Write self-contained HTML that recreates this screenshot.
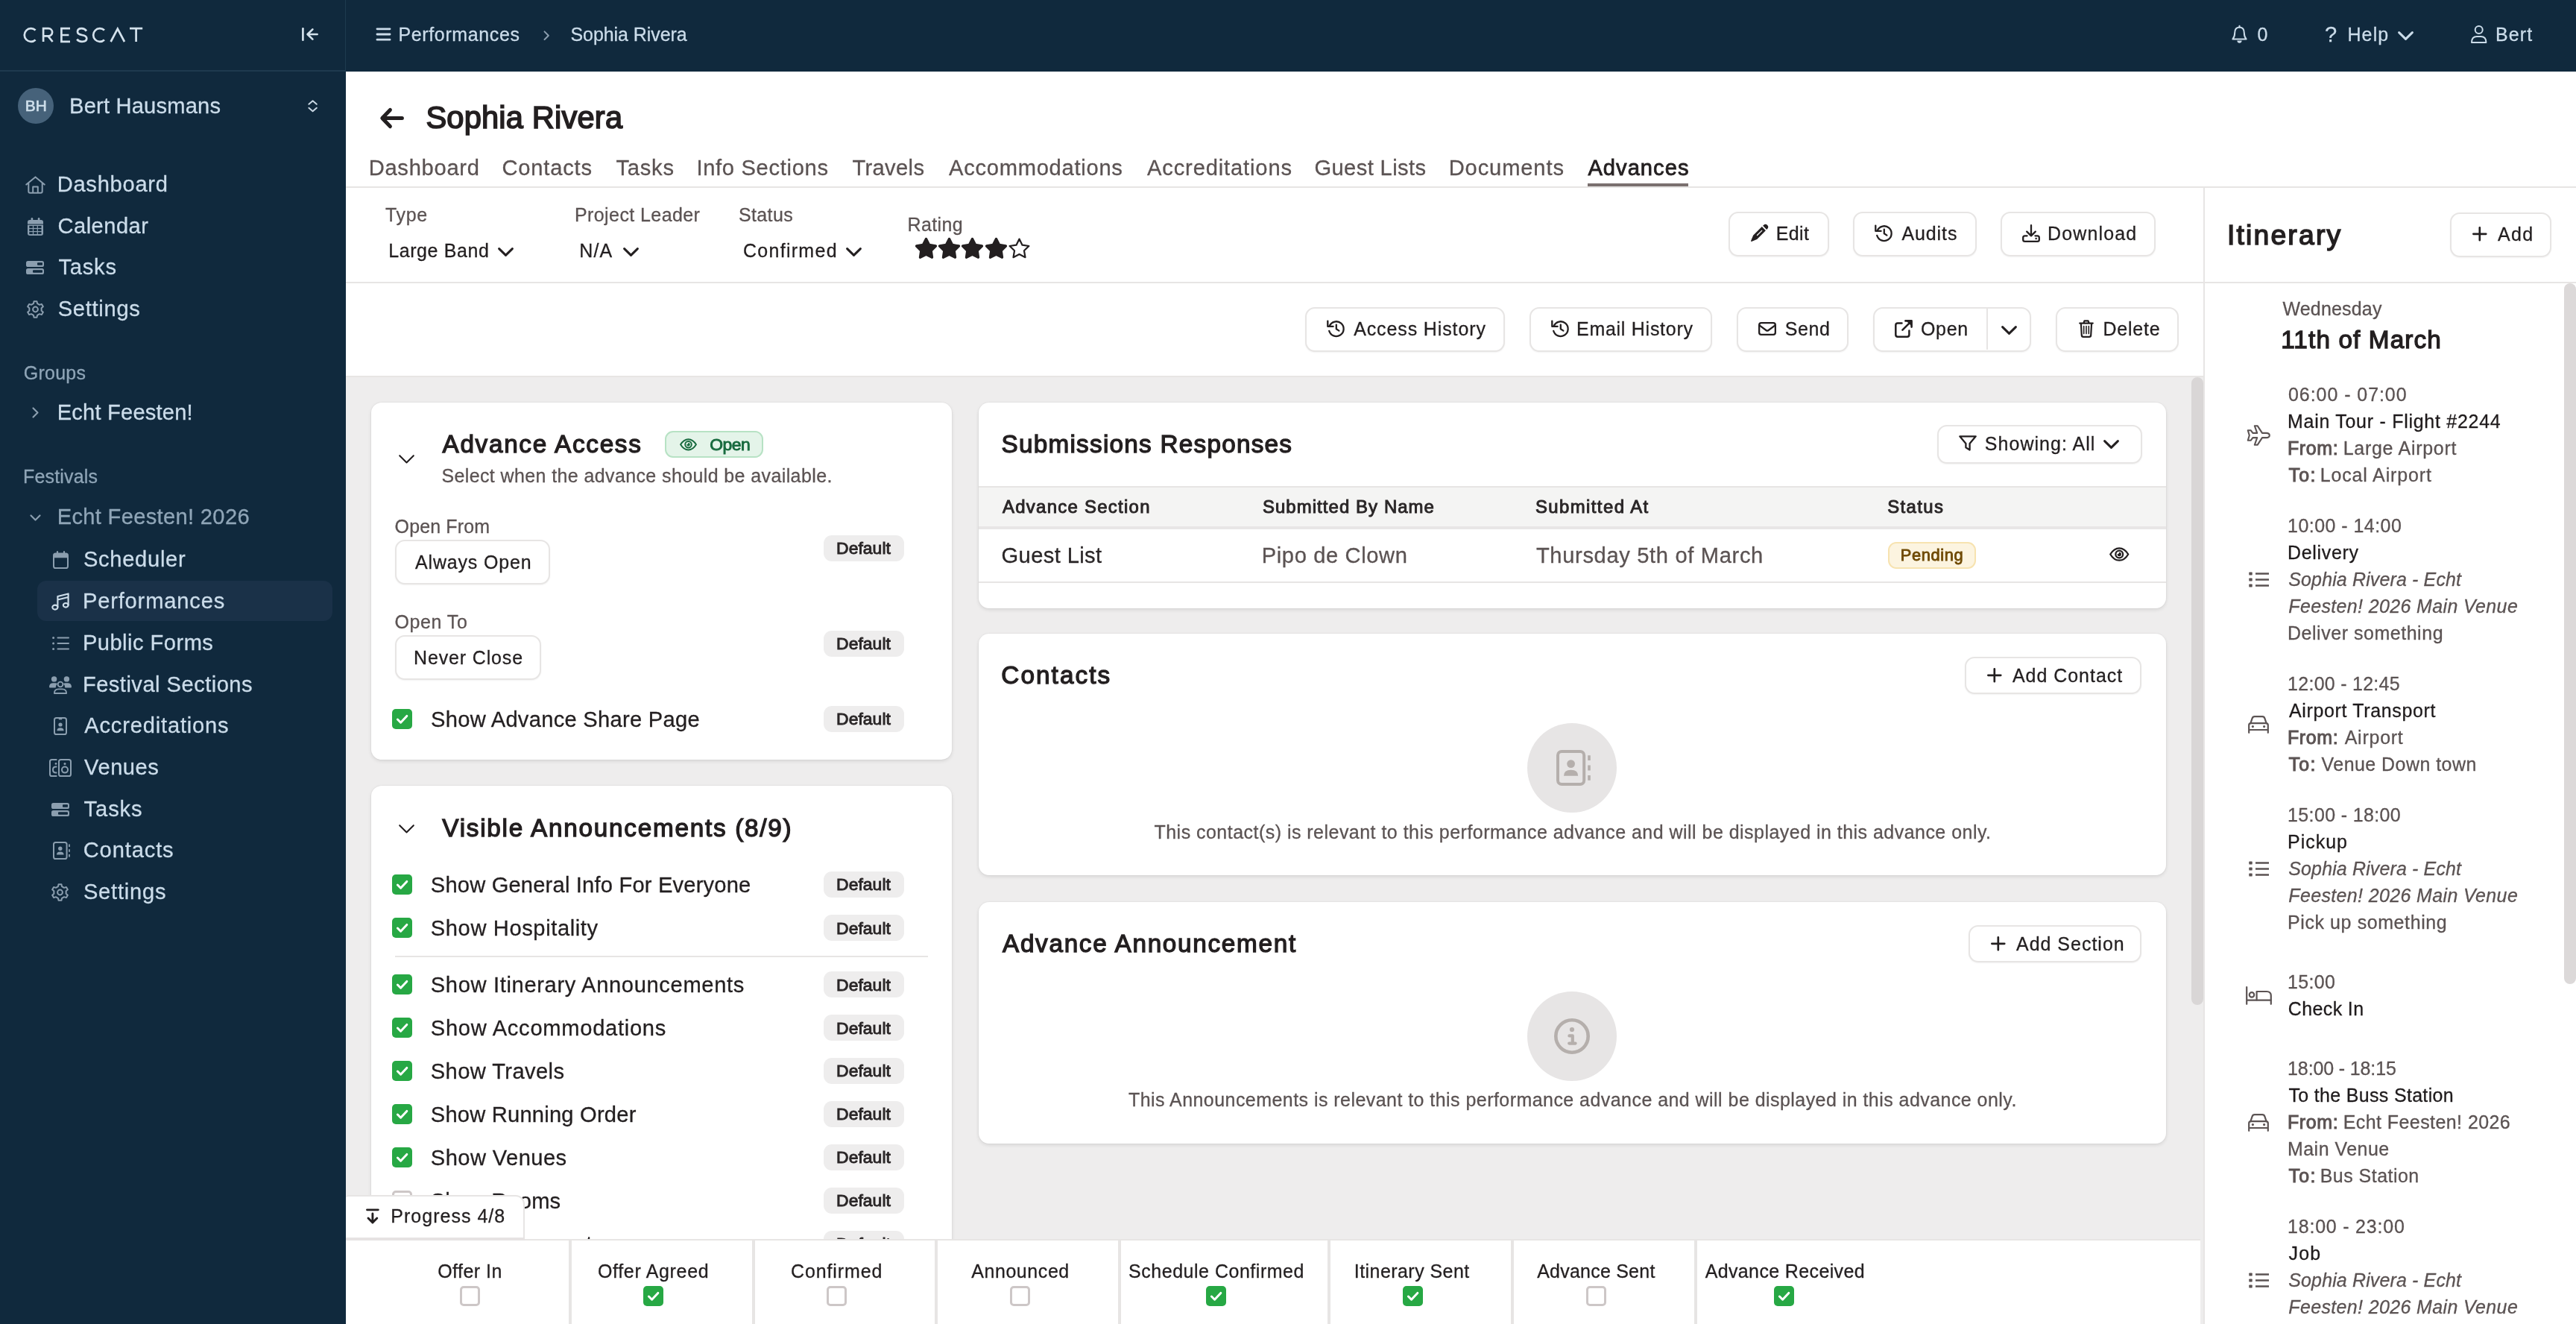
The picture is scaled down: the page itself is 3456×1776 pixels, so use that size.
<!DOCTYPE html>
<html><head><meta charset="utf-8"><title>Sophia Rivera - Advances</title>
<style>
html,body{margin:0;padding:0;}
body{width:3456px;height:1776px;overflow:hidden;position:relative;background:#fff;font-family:"Liberation Sans",sans-serif;}
.t{position:absolute;white-space:nowrap;-webkit-text-stroke:0.3px;}
.b{position:absolute;box-sizing:border-box;}
.i{position:absolute;overflow:visible;}
.card{background:#fff;border-radius:14px;box-shadow:0 2px 4px rgba(0,0,0,.10),0 0 0 1px rgba(0,0,0,.03);}
.btn{background:#fff;border:2px solid #e7e5e4;border-radius:12px;box-shadow:0 1px 2px rgba(0,0,0,.04);}
.pill{background:#eeeded;border-radius:12px;}
#root{position:absolute;left:0;top:0;width:3456px;height:1776px;overflow:hidden;will-change:transform;transform:translateZ(0);}
</style></head><body><div id="root">
<div class="b" style="left:464px;top:506px;width:2492px;height:1270px;background:#eeeded;"></div>
<div class="b" style="left:498px;top:540px;width:779px;height:479px;background:#fff;border-radius:14px;box-shadow:0 2px 5px rgba(0,0,0,.10),0 0 0 1px rgba(0,0,0,.025);"></div>
<svg class="i" style="left:534.7px;top:609.6px" width="21" height="12" viewBox="0 0 21 12"><path d="M1.2 1.2 L10.5 10.5 L19.8 1.2" fill="none" stroke="#231f20" stroke-width="2.1" stroke-linecap="round" stroke-linejoin="round"/></svg>
<div class="t" style="left:593.5px;top:575.0px;height:41px;line-height:41px;font-size:33.28px;color:#231f20;-webkit-text-stroke:1.33px;letter-spacing:1.71px;">Advance Access</div>
<div class="b" style="left:892px;top:578px;width:132px;height:36px;background:#e4f4e9;border:2px solid #b7e2c4;border-radius:11px;"></div>
<svg class="i" style="left:911.7px;top:587.0px" width="23.0" height="18.6" viewBox="0 0 28 20"><path d="M1.3 10 Q6.5 1.3 14 1.3 Q21.5 1.3 26.7 10 Q21.5 18.7 14 18.7 Q6.5 18.7 1.3 10 Z" fill="none" stroke="#176a3e" stroke-width="2.4" stroke-linecap="round" stroke-linejoin="round"/><circle cx="14" cy="10" r="5.2" fill="none" stroke="#176a3e" stroke-width="2.4"/><path d="M14 7.2 A2.8 2.8 0 1 1 11.2 10 Q13.6 10 14 7.2 Z" fill="#176a3e"/></svg>
<div class="t" style="left:952.3px;top:581.0px;height:30px;line-height:30px;font-size:22.88px;color:#176a3e;-webkit-text-stroke:0.92px;letter-spacing:-0.47px;">Open</div>
<div class="t" style="left:592.4px;top:622.0px;height:32px;line-height:32px;font-size:24.96px;color:#5b5353;letter-spacing:0.41px;">Select when the advance should be available.</div>
<div class="t" style="left:529.6px;top:690.0px;height:32px;line-height:32px;font-size:24.96px;color:#5b5353;letter-spacing:0.16px;">Open From</div>
<div class="b" style="left:530px;top:724px;width:208px;height:60px;background:#fff;border:2px solid #e7e5e4;border-radius:13px;box-shadow:0 1px 2px rgba(0,0,0,.05);"></div>
<div class="t" style="left:557.0px;top:738.0px;height:32px;line-height:32px;font-size:24.96px;color:#231f20;letter-spacing:0.86px;">Always Open</div>
<div class="b" style="left:1105px;top:718px;width:108px;height:35px;background:#eeeded;border-radius:11px;"></div>
<div class="t" style="left:1122.1px;top:720.0px;height:30px;line-height:30px;font-size:22.88px;color:#2a2627;-webkit-text-stroke:0.92px;letter-spacing:0.05px;">Default</div>
<div class="t" style="left:529.6px;top:818.0px;height:32px;line-height:32px;font-size:24.96px;color:#5b5353;letter-spacing:0.55px;">Open To</div>
<div class="b" style="left:530px;top:852px;width:196px;height:60px;background:#fff;border:2px solid #e7e5e4;border-radius:13px;box-shadow:0 1px 2px rgba(0,0,0,.05);"></div>
<div class="t" style="left:555.0px;top:866.0px;height:32px;line-height:32px;font-size:24.96px;color:#231f20;letter-spacing:0.88px;">Never Close</div>
<div class="b" style="left:1105px;top:846px;width:108px;height:35px;background:#eeeded;border-radius:11px;"></div>
<div class="t" style="left:1122.1px;top:848.0px;height:30px;line-height:30px;font-size:22.88px;color:#2a2627;-webkit-text-stroke:0.92px;letter-spacing:0.05px;">Default</div>
<div class="b" style="left:526.0px;top:951.0px;width:27px;height:27px;background:#27a844;border-radius:5px;"></div>
<svg class="i" style="left:526.0px;top:951.0px" width="27.0" height="27.0" viewBox="0 0 27 27"><path d="M7.4 14 L11.6 18.2 L19.8 9.4" fill="none" stroke="#fff" stroke-width="3" stroke-linecap="round" stroke-linejoin="round"/></svg>
<div class="t" style="left:578.0px;top:947.0px;height:36px;line-height:36px;font-size:29.12px;color:#231f20;letter-spacing:0.28px;">Show Advance Share Page</div>
<div class="b" style="left:1105px;top:947px;width:108px;height:35px;background:#eeeded;border-radius:11px;"></div>
<div class="t" style="left:1122.1px;top:949.0px;height:30px;line-height:30px;font-size:22.88px;color:#2a2627;-webkit-text-stroke:0.92px;letter-spacing:0.05px;">Default</div>
<div class="b" style="left:498px;top:1054px;width:779px;height:760px;background:#fff;border-radius:14px;box-shadow:0 2px 5px rgba(0,0,0,.10),0 0 0 1px rgba(0,0,0,.025);"></div>
<svg class="i" style="left:534.7px;top:1106.2px" width="21" height="12" viewBox="0 0 21 12"><path d="M1.2 1.2 L10.5 10.5 L19.8 1.2" fill="none" stroke="#231f20" stroke-width="2.1" stroke-linecap="round" stroke-linejoin="round"/></svg>
<div class="t" style="left:593.3px;top:1090.0px;height:41px;line-height:41px;font-size:33.28px;color:#231f20;-webkit-text-stroke:1.33px;letter-spacing:1.75px;">Visible Announcements (8/9)</div>
<div class="b" style="left:525.9px;top:1172.8px;width:27px;height:27px;background:#27a844;border-radius:5px;"></div>
<svg class="i" style="left:525.9px;top:1172.8px" width="27.0" height="27.0" viewBox="0 0 27 27"><path d="M7.4 14 L11.6 18.2 L19.8 9.4" fill="none" stroke="#fff" stroke-width="3" stroke-linecap="round" stroke-linejoin="round"/></svg>
<div class="t" style="left:577.8px;top:1169.0px;height:36px;line-height:36px;font-size:29.12px;color:#231f20;letter-spacing:0.19px;">Show General Info For Everyone</div>
<div class="b" style="left:1105px;top:1169.1px;width:108px;height:35px;background:#eeeded;border-radius:11px;"></div>
<div class="t" style="left:1122.1px;top:1171.0px;height:30px;line-height:30px;font-size:22.88px;color:#2a2627;-webkit-text-stroke:0.92px;letter-spacing:0.05px;">Default</div>
<div class="b" style="left:525.9px;top:1231.0px;width:27px;height:27px;background:#27a844;border-radius:5px;"></div>
<svg class="i" style="left:525.9px;top:1231.0px" width="27.0" height="27.0" viewBox="0 0 27 27"><path d="M7.4 14 L11.6 18.2 L19.8 9.4" fill="none" stroke="#fff" stroke-width="3" stroke-linecap="round" stroke-linejoin="round"/></svg>
<div class="t" style="left:577.8px;top:1227.0px;height:36px;line-height:36px;font-size:29.12px;color:#231f20;letter-spacing:0.61px;">Show Hospitality</div>
<div class="b" style="left:1105px;top:1227.3px;width:108px;height:35px;background:#eeeded;border-radius:11px;"></div>
<div class="t" style="left:1122.1px;top:1230.0px;height:30px;line-height:30px;font-size:22.88px;color:#2a2627;-webkit-text-stroke:0.92px;letter-spacing:0.05px;">Default</div>
<div class="b" style="left:525.9px;top:1307.1px;width:27px;height:27px;background:#27a844;border-radius:5px;"></div>
<svg class="i" style="left:525.9px;top:1307.1px" width="27.0" height="27.0" viewBox="0 0 27 27"><path d="M7.4 14 L11.6 18.2 L19.8 9.4" fill="none" stroke="#fff" stroke-width="3" stroke-linecap="round" stroke-linejoin="round"/></svg>
<div class="t" style="left:577.8px;top:1303.0px;height:36px;line-height:36px;font-size:29.12px;color:#231f20;letter-spacing:0.65px;">Show Itinerary Announcements</div>
<div class="b" style="left:1105px;top:1303.3999999999999px;width:108px;height:35px;background:#eeeded;border-radius:11px;"></div>
<div class="t" style="left:1122.1px;top:1306.0px;height:30px;line-height:30px;font-size:22.88px;color:#2a2627;-webkit-text-stroke:0.92px;letter-spacing:0.05px;">Default</div>
<div class="b" style="left:525.9px;top:1365.0px;width:27px;height:27px;background:#27a844;border-radius:5px;"></div>
<svg class="i" style="left:525.9px;top:1365.0px" width="27.0" height="27.0" viewBox="0 0 27 27"><path d="M7.4 14 L11.6 18.2 L19.8 9.4" fill="none" stroke="#fff" stroke-width="3" stroke-linecap="round" stroke-linejoin="round"/></svg>
<div class="t" style="left:577.8px;top:1361.0px;height:36px;line-height:36px;font-size:29.12px;color:#231f20;letter-spacing:0.72px;">Show Accommodations</div>
<div class="b" style="left:1105px;top:1361.3px;width:108px;height:35px;background:#eeeded;border-radius:11px;"></div>
<div class="t" style="left:1122.1px;top:1364.0px;height:30px;line-height:30px;font-size:22.88px;color:#2a2627;-webkit-text-stroke:0.92px;letter-spacing:0.05px;">Default</div>
<div class="b" style="left:525.9px;top:1422.8px;width:27px;height:27px;background:#27a844;border-radius:5px;"></div>
<svg class="i" style="left:525.9px;top:1422.8px" width="27.0" height="27.0" viewBox="0 0 27 27"><path d="M7.4 14 L11.6 18.2 L19.8 9.4" fill="none" stroke="#fff" stroke-width="3" stroke-linecap="round" stroke-linejoin="round"/></svg>
<div class="t" style="left:577.8px;top:1419.0px;height:36px;line-height:36px;font-size:29.12px;color:#231f20;letter-spacing:0.41px;">Show Travels</div>
<div class="b" style="left:1105px;top:1419.1px;width:108px;height:35px;background:#eeeded;border-radius:11px;"></div>
<div class="t" style="left:1122.1px;top:1421.0px;height:30px;line-height:30px;font-size:22.88px;color:#2a2627;-webkit-text-stroke:0.92px;letter-spacing:0.05px;">Default</div>
<div class="b" style="left:525.9px;top:1480.8px;width:27px;height:27px;background:#27a844;border-radius:5px;"></div>
<svg class="i" style="left:525.9px;top:1480.8px" width="27.0" height="27.0" viewBox="0 0 27 27"><path d="M7.4 14 L11.6 18.2 L19.8 9.4" fill="none" stroke="#fff" stroke-width="3" stroke-linecap="round" stroke-linejoin="round"/></svg>
<div class="t" style="left:577.8px;top:1477.0px;height:36px;line-height:36px;font-size:29.12px;color:#231f20;letter-spacing:0.22px;">Show Running Order</div>
<div class="b" style="left:1105px;top:1477.1px;width:108px;height:35px;background:#eeeded;border-radius:11px;"></div>
<div class="t" style="left:1122.1px;top:1479.0px;height:30px;line-height:30px;font-size:22.88px;color:#2a2627;-webkit-text-stroke:0.92px;letter-spacing:0.05px;">Default</div>
<div class="b" style="left:525.9px;top:1538.8px;width:27px;height:27px;background:#27a844;border-radius:5px;"></div>
<svg class="i" style="left:525.9px;top:1538.8px" width="27.0" height="27.0" viewBox="0 0 27 27"><path d="M7.4 14 L11.6 18.2 L19.8 9.4" fill="none" stroke="#fff" stroke-width="3" stroke-linecap="round" stroke-linejoin="round"/></svg>
<div class="t" style="left:577.8px;top:1535.0px;height:36px;line-height:36px;font-size:29.12px;color:#231f20;letter-spacing:0.43px;">Show Venues</div>
<div class="b" style="left:1105px;top:1535.1px;width:108px;height:35px;background:#eeeded;border-radius:11px;"></div>
<div class="t" style="left:1122.1px;top:1537.0px;height:30px;line-height:30px;font-size:22.88px;color:#2a2627;-webkit-text-stroke:0.92px;letter-spacing:0.05px;">Default</div>
<div class="b" style="left:525.9px;top:1596.8px;width:27px;height:27px;background:#fff;border:3px solid #cdc7c7;border-radius:5px;"></div>
<div class="t" style="left:577.8px;top:1593.0px;height:36px;line-height:36px;font-size:29.12px;color:#231f20;letter-spacing:0.13px;">Show Rooms</div>
<div class="b" style="left:1105px;top:1593.1px;width:108px;height:35px;background:#eeeded;border-radius:11px;"></div>
<div class="t" style="left:1122.1px;top:1595.0px;height:30px;line-height:30px;font-size:22.88px;color:#2a2627;-webkit-text-stroke:0.92px;letter-spacing:0.05px;">Default</div>
<div class="b" style="left:525.9px;top:1654.8px;width:27px;height:27px;background:#27a844;border-radius:5px;"></div>
<svg class="i" style="left:525.9px;top:1654.8px" width="27.0" height="27.0" viewBox="0 0 27 27"><path d="M7.4 14 L11.6 18.2 L19.8 9.4" fill="none" stroke="#fff" stroke-width="3" stroke-linecap="round" stroke-linejoin="round"/></svg>
<div class="t" style="left:577.8px;top:1651.0px;height:36px;line-height:36px;font-size:29.12px;color:#231f20;letter-spacing:0.24px;">Show Documents</div>
<div class="b" style="left:1105px;top:1651.1px;width:108px;height:35px;background:#eeeded;border-radius:11px;"></div>
<div class="t" style="left:1122.1px;top:1653.0px;height:30px;line-height:30px;font-size:22.88px;color:#2a2627;-webkit-text-stroke:0.92px;letter-spacing:0.05px;">Default</div>
<div class="b" style="left:530px;top:1282px;width:715px;height:2px;background:#e7e5e4;"></div>
<div class="b" style="left:1313px;top:540px;width:1593px;height:276px;background:#fff;border-radius:14px;box-shadow:0 2px 5px rgba(0,0,0,.10),0 0 0 1px rgba(0,0,0,.025);"></div>
<div class="t" style="left:1343.5px;top:575.0px;height:41px;line-height:41px;font-size:33.28px;color:#231f20;-webkit-text-stroke:1.33px;letter-spacing:1.26px;">Submissions Responses</div>
<div class="b" style="left:2599px;top:570px;width:275px;height:52px;background:#fff;border:2px solid #e7e5e4;border-radius:13px;box-shadow:0 1px 2px rgba(0,0,0,.05);"></div>
<svg class="i" style="left:2628.0px;top:584.2px" width="24.0" height="21.0" viewBox="0 0 24 21"><path d="M1.3 1.3 H22.7 L14.6 11 V19.6 L9.4 16.2 V11 Z" fill="none" stroke="#231f20" stroke-width="2.3" stroke-linecap="round" stroke-linejoin="round"/></svg>
<div class="t" style="left:2662.8px;top:579.0px;height:32px;line-height:32px;font-size:24.96px;color:#231f20;letter-spacing:1.06px;">Showing: All</div>
<svg class="i" style="left:2822.3px;top:590.3px" width="21.0" height="12.0" viewBox="0 0 21 12"><path d="M1.6 1.6 L10.5 10.4 L19.4 1.6" fill="none" stroke="#231f20" stroke-width="3" stroke-linecap="round" stroke-linejoin="round"/></svg>
<div class="b" style="left:1313px;top:652px;width:1593px;height:58px;background:#f4f4f3;border-top:2px solid #e7e5e4;border-bottom:4px solid #e8e6e6;"></div>
<div class="t" style="left:1345.0px;top:664.0px;height:31px;line-height:31px;font-size:23.92px;color:#2a2627;-webkit-text-stroke:0.96px;letter-spacing:1.29px;">Advance Section</div>
<div class="t" style="left:1693.9px;top:664.0px;height:31px;line-height:31px;font-size:23.92px;color:#2a2627;-webkit-text-stroke:0.96px;letter-spacing:1.09px;">Submitted By Name</div>
<div class="t" style="left:2059.9px;top:664.0px;height:31px;line-height:31px;font-size:23.92px;color:#2a2627;-webkit-text-stroke:0.96px;letter-spacing:1.43px;">Submitted At</div>
<div class="t" style="left:2532.3px;top:664.0px;height:31px;line-height:31px;font-size:23.92px;color:#2a2627;-webkit-text-stroke:0.96px;letter-spacing:1.36px;">Status</div>
<div class="t" style="left:1343.5px;top:727.0px;height:36px;line-height:36px;font-size:29.12px;color:#2a2627;letter-spacing:0.40px;">Guest List</div>
<div class="t" style="left:1692.7px;top:727.0px;height:36px;line-height:36px;font-size:29.12px;color:#5b5353;letter-spacing:0.63px;">Pipo de Clown</div>
<div class="t" style="left:2060.9px;top:727.0px;height:36px;line-height:36px;font-size:29.12px;color:#5b5353;letter-spacing:0.66px;">Thursday 5th of March</div>
<div class="b" style="left:2533px;top:727px;width:118px;height:36px;background:#fcf4e0;border:2px solid #f7e3b0;border-radius:11px;"></div>
<div class="t" style="left:2549.7px;top:730.0px;height:29px;line-height:29px;font-size:21.84px;color:#6f4a04;-webkit-text-stroke:0.87px;letter-spacing:0.64px;">Pending</div>
<svg class="i" style="left:2830.4px;top:733.2px" width="26.5" height="21.0" viewBox="0 0 28 20"><path d="M1.3 10 Q6.5 1.3 14 1.3 Q21.5 1.3 26.7 10 Q21.5 18.7 14 18.7 Q6.5 18.7 1.3 10 Z" fill="none" stroke="#231f20" stroke-width="2.4" stroke-linecap="round" stroke-linejoin="round"/><circle cx="14" cy="10" r="5.2" fill="none" stroke="#231f20" stroke-width="2.4"/><path d="M14 7.2 A2.8 2.8 0 1 1 11.2 10 Q13.6 10 14 7.2 Z" fill="#231f20"/></svg>
<div class="b" style="left:1313px;top:780px;width:1593px;height:2px;background:#e7e5e4;"></div>
<div class="b" style="left:1313px;top:850px;width:1593px;height:324px;background:#fff;border-radius:14px;box-shadow:0 2px 5px rgba(0,0,0,.10),0 0 0 1px rgba(0,0,0,.025);"></div>
<div class="t" style="left:1343.3px;top:885.0px;height:41px;line-height:41px;font-size:33.28px;color:#231f20;-webkit-text-stroke:1.33px;letter-spacing:2.08px;">Contacts</div>
<div class="b" style="left:2636px;top:881px;width:237px;height:50px;background:#fff;border:2px solid #e7e5e4;border-radius:13px;box-shadow:0 1px 2px rgba(0,0,0,.05);"></div>
<svg class="i" style="left:2666.2px;top:895.7px" width="19.6" height="19.6" viewBox="0 0 17.5 17.5"><path d="M8.75 1.2 V16.3 M1.2 8.75 H16.3" fill="none" stroke="#231f20" stroke-width="2.4" stroke-linecap="round" stroke-linejoin="round"/></svg>
<div class="t" style="left:2700.0px;top:890.0px;height:32px;line-height:32px;font-size:24.96px;color:#231f20;letter-spacing:0.98px;">Add Contact</div>
<div class="b" style="left:2049px;top:970px;width:120px;height:120px;background:#e7e5e5;border-radius:50%;"></div>
<svg class="i" style="left:2087.9px;top:1006.0px" width="46.0" height="48.0" viewBox="0 0 23 24"><rect x="1" y="1" width="17.6" height="22" rx="2.6" fill="none" stroke="#b5afac" stroke-width="2"/><circle cx="9.8" cy="9.3" r="2.7" fill="#b5afac"/><path d="M5 17.4 Q5 13.4 9.8 13.4 Q14.6 13.4 14.6 17.4 Z" fill="#b5afac"/><path d="M22 3.6 V7 M22 10.3 V13.7 M22 17 V20.4" fill="none" stroke="#b5afac" stroke-width="1.8" stroke-linecap="butt" stroke-linejoin="round"/></svg>
<div class="t" style="left:1548.5px;top:1100.0px;height:32px;line-height:32px;font-size:24.96px;color:#5b5353;letter-spacing:0.49px;">This contact(s) is relevant to this performance advance and will be displayed in this advance only.</div>
<div class="b" style="left:1313px;top:1210px;width:1593px;height:324px;background:#fff;border-radius:14px;box-shadow:0 2px 5px rgba(0,0,0,.10),0 0 0 1px rgba(0,0,0,.025);"></div>
<div class="t" style="left:1345.0px;top:1245.0px;height:41px;line-height:41px;font-size:33.28px;color:#231f20;-webkit-text-stroke:1.33px;letter-spacing:1.71px;">Advance Announcement</div>
<div class="b" style="left:2641px;top:1241px;width:232px;height:50px;background:#fff;border:2px solid #e7e5e4;border-radius:13px;box-shadow:0 1px 2px rgba(0,0,0,.05);"></div>
<svg class="i" style="left:2671.2px;top:1255.7px" width="19.6" height="19.6" viewBox="0 0 17.5 17.5"><path d="M8.75 1.2 V16.3 M1.2 8.75 H16.3" fill="none" stroke="#231f20" stroke-width="2.4" stroke-linecap="round" stroke-linejoin="round"/></svg>
<div class="t" style="left:2705.0px;top:1250.0px;height:32px;line-height:32px;font-size:24.96px;color:#231f20;letter-spacing:1.01px;">Add Section</div>
<div class="b" style="left:2049px;top:1330px;width:120px;height:120px;background:#e7e5e5;border-radius:50%;"></div>
<svg class="i" style="left:2085.0px;top:1366.0px" width="48.0" height="48.0" viewBox="0 0 48 48"><circle cx="24" cy="24" r="21.7" fill="none" stroke="#b5afac" stroke-width="4.6"/><circle cx="24" cy="15" r="3.1" fill="#b5afac"/><path d="M20.4 23.4 H24.8 V33.4 M20.2 33.6 H28.6" fill="none" stroke="#b5afac" stroke-width="4.2" stroke-linecap="round" stroke-linejoin="round"/></svg>
<div class="t" style="left:1514.0px;top:1459.0px;height:32px;line-height:32px;font-size:24.96px;color:#5b5353;letter-spacing:0.47px;">This Announcements is relevant to this performance advance and will be displayed in this advance only.</div>
<div class="b" style="left:2940px;top:506px;width:16px;height:842px;background:#d9d6d6;border-radius:8px;"></div>
<div class="b" style="left:0px;top:0px;width:464px;height:1776px;background:#10293d;"></div>
<div class="b" style="left:0px;top:94px;width:464px;height:2px;background:#1e3a4f;"></div>
<div class="b" style="left:463px;top:0px;width:1px;height:96px;background:#1e3a4f;"></div>
<svg class="i" style="left:0;top:0" width="220" height="96" viewBox="0 0 220 96"><path d="M47.6 40.6 A8.8 8.8 0 1 0 47.6 53.4 M58.1 56 V38.2 H65 A5.1 5.1 0 0 1 65 48.4 H58.1 M64.6 48.6 L70.6 56 M94 38.2 H82.4 V55.8 H94 M82.4 47 H92.4 M116 41.6 Q113.6 38.2 109.6 38.2 Q104 38.2 104 42.6 Q104 46 110 47 Q116.3 48 116.3 51.6 Q116.3 55.8 110 55.8 Q105.6 55.8 103.2 52.6 M140 40.6 A8.8 8.8 0 1 0 140 53.4 M148.6 56 L157.8 38.6 L167 56 M174 38.2 H191.2 M182.6 38.2 V56" fill="none" stroke="#d3e1ec" stroke-width="2.7" stroke-linecap="butt" stroke-linejoin="miter"/></svg>
<svg class="i" style="left:404.7px;top:37.0px" width="22.0" height="18.0" viewBox="0 0 22 18"><path d="M1.4 1.3 V16.7" fill="none" stroke="#d3e1ec" stroke-width="2.7" stroke-linecap="round" stroke-linejoin="round"/><path d="M20.6 9 H8.2 M14.4 2.4 L7.6 9 L14.4 15.6" fill="none" stroke="#d3e1ec" stroke-width="2.7" stroke-linecap="round" stroke-linejoin="round"/></svg>
<div class="b" style="left:24px;top:118px;width:48px;height:48px;background:#46627a;border-radius:50%;"></div>
<div class="t" style="left:33.8px;top:128.0px;height:27px;line-height:27px;font-size:20.8px;color:#d0e0ec;letter-spacing:0.02px;-webkit-text-stroke:0.6px;">BH</div>
<div class="t" style="left:93.1px;top:124.0px;height:36px;line-height:36px;font-size:29.12px;color:#cbdcea;letter-spacing:0.19px;">Bert Hausmans</div>
<svg class="i" style="left:413.2px;top:134.1px" width="13.2" height="16.5" viewBox="0 0 13.2 16.5"><path d="M1.4 5.8 L6.6 1.3 L11.8 5.8 M1.4 10.7 L6.6 15.2 L11.8 10.7" fill="none" stroke="#c9d8e4" stroke-width="2" stroke-linecap="round" stroke-linejoin="round"/></svg>
<div class="t" style="left:76.7px;top:229.0px;height:36px;line-height:36px;font-size:29.12px;color:#cbdcea;letter-spacing:0.73px;">Dashboard</div>
<div class="t" style="left:77.5px;top:285.0px;height:36px;line-height:36px;font-size:29.12px;color:#cbdcea;letter-spacing:0.47px;">Calendar</div>
<div class="t" style="left:78.4px;top:340.0px;height:36px;line-height:36px;font-size:29.12px;color:#cbdcea;letter-spacing:0.80px;">Tasks</div>
<div class="t" style="left:77.7px;top:396.0px;height:36px;line-height:36px;font-size:29.12px;color:#cbdcea;letter-spacing:0.72px;">Settings</div>
<svg class="i" style="left:33.7px;top:236.0px" width="27.0" height="24.0" viewBox="0 0 27 24"><path d="M1.3 11.6 L13.5 1.4 L25.7 11.6 M4.3 9.6 V20.8 Q4.3 22.8 6.3 22.8 H20.7 Q22.7 22.8 22.7 20.8 V9.6 M10.2 22.6 V14.6 H16.8 V22.6" fill="none" stroke="#8b9eaf" stroke-width="2" stroke-linecap="round" stroke-linejoin="round"/></svg>
<svg class="i" style="left:36.6px;top:292.0px" width="21.0" height="24.0" viewBox="0 0 21 24"><rect x="0" y="3" width="21" height="21" rx="3" fill="#8b9eaf"/><rect x="4.6" y="0" width="2.6" height="6" rx="1.2" fill="#8b9eaf"/><rect x="13.8" y="0" width="2.6" height="6" rx="1.2" fill="#8b9eaf"/><rect x="2.30" y="11.00" width="4.6" height="2.9" fill="#10293d"/><rect x="8.10" y="11.00" width="4.6" height="2.9" fill="#10293d"/><rect x="13.90" y="11.00" width="4.6" height="2.9" fill="#10293d"/><rect x="2.30" y="15.10" width="4.6" height="2.9" fill="#10293d"/><rect x="8.10" y="15.10" width="4.6" height="2.9" fill="#10293d"/><rect x="13.90" y="15.10" width="4.6" height="2.9" fill="#10293d"/><rect x="2.30" y="19.20" width="4.6" height="2.9" fill="#10293d"/><rect x="8.10" y="19.20" width="4.6" height="2.9" fill="#10293d"/><rect x="13.90" y="19.20" width="4.6" height="2.9" fill="#10293d"/><rect x="0" y="8.6" width="21" height="1" fill="#10293d"/></svg>
<svg class="i" style="left:35.0px;top:350.0px" width="24.0" height="18.0" viewBox="0 0 24 18"><rect x="0" y="0" width="24" height="8" rx="2.6" fill="#8b9eaf"/><rect x="0" y="10" width="24" height="8" rx="2.6" fill="#8b9eaf"/><rect x="15" y="2.2" width="7" height="3.6" rx="1" fill="#10293d"/><rect x="9" y="12.2" width="13" height="3.6" rx="1" fill="#10293d"/></svg>
<svg class="i" style="left:35.7px;top:403.0px" width="23.0" height="24.0" viewBox="0 0 23 24"><path d="M9.55 1.17 L13.45 1.17 L14.06 4.11 L17.05 5.83 L19.90 4.90 L21.85 8.27 L19.62 10.27 L19.62 13.73 L21.85 15.73 L19.90 19.10 L17.05 18.17 L14.06 19.89 L13.45 22.83 L9.55 22.83 L8.94 19.89 L5.95 18.17 L3.10 19.10 L1.15 15.73 L3.38 13.73 L3.38 10.27 L1.15 8.27 L3.10 4.90 L5.95 5.83 L8.94 4.11 Z" fill="none" stroke="#8b9eaf" stroke-width="2" stroke-linecap="round" stroke-linejoin="round"/><circle cx="11.5" cy="12" r="3.4" fill="none" stroke="#8b9eaf" stroke-width="2"/></svg>
<div class="t" style="left:31.8px;top:484.0px;height:32px;line-height:32px;font-size:24.96px;color:#8fa5b7;letter-spacing:0.25px;">Groups</div>
<svg class="i" style="left:43.0px;top:545.5px" width="9.0" height="15.0" viewBox="0 0 9 15"><path d="M1.5 1.5 L7.5 7.5 L1.5 13.5" fill="none" stroke="#8b9eaf" stroke-width="2.2" stroke-linecap="round" stroke-linejoin="round"/></svg>
<div class="t" style="left:76.7px;top:535.0px;height:36px;line-height:36px;font-size:29.12px;color:#cbdcea;letter-spacing:0.20px;">Echt Feesten!</div>
<div class="t" style="left:31.0px;top:623.0px;height:32px;line-height:32px;font-size:24.96px;color:#8fa5b7;letter-spacing:0.18px;">Festivals</div>
<svg class="i" style="left:39.5px;top:689.5px" width="15.0" height="9.0" viewBox="0 0 15 9"><path d="M1.5 1.5 L7.5 7.5 L13.5 1.5" fill="none" stroke="#8b9eaf" stroke-width="2.2" stroke-linecap="round" stroke-linejoin="round"/></svg>
<div class="t" style="left:76.7px;top:675.0px;height:36px;line-height:36px;font-size:29.12px;color:#8fa5b7;letter-spacing:0.32px;">Echt Feesten! 2026</div>
<div class="b" style="left:50px;top:779px;width:396px;height:54px;background:#1a3148;border-radius:12px;"></div>
<div class="t" style="left:111.9px;top:732.0px;height:36px;line-height:36px;font-size:29.12px;color:#cbdcea;letter-spacing:0.71px;">Scheduler</div>
<div class="t" style="left:110.9px;top:788.0px;height:36px;line-height:36px;font-size:29.12px;color:#cbdcea;letter-spacing:0.83px;">Performances</div>
<div class="t" style="left:110.9px;top:844.0px;height:36px;line-height:36px;font-size:29.12px;color:#cbdcea;letter-spacing:0.47px;">Public Forms</div>
<div class="t" style="left:110.9px;top:900.0px;height:36px;line-height:36px;font-size:29.12px;color:#cbdcea;letter-spacing:0.48px;">Festival Sections</div>
<div class="t" style="left:113.2px;top:955.0px;height:36px;line-height:36px;font-size:29.12px;color:#cbdcea;letter-spacing:0.82px;">Accreditations</div>
<div class="t" style="left:113.1px;top:1011.0px;height:36px;line-height:36px;font-size:29.12px;color:#cbdcea;letter-spacing:0.53px;">Venues</div>
<div class="t" style="left:112.6px;top:1067.0px;height:36px;line-height:36px;font-size:29.12px;color:#cbdcea;letter-spacing:0.90px;">Tasks</div>
<div class="t" style="left:111.7px;top:1122.0px;height:36px;line-height:36px;font-size:29.12px;color:#cbdcea;letter-spacing:0.87px;">Contacts</div>
<div class="t" style="left:111.9px;top:1178.0px;height:36px;line-height:36px;font-size:29.12px;color:#cbdcea;letter-spacing:0.77px;">Settings</div>
<svg class="i" style="left:70.5px;top:739.0px" width="21.0" height="24.0" viewBox="0 0 21 24"><rect x="1" y="3.6" width="19" height="19.4" rx="2.6" fill="none" stroke="#8b9eaf" stroke-width="2"/><path d="M1 9.2 V6.2 Q1 3.6 3.6 3.6 H17.4 Q20 3.6 20 6.2 V9.2 Z" fill="#8b9eaf"/><path d="M6 1 V5 M15 1 V5" fill="none" stroke="#8b9eaf" stroke-width="2.2" stroke-linecap="round" stroke-linejoin="round"/></svg>
<svg class="i" style="left:69.2px;top:795.0px" width="24.0" height="24.0" viewBox="0 0 24 24"><path d="M8.4 19 V5 L22.6 1.4 V16.4 M8.4 9.6 L22.6 6" fill="none" stroke="#cfdfeb" stroke-width="2.1" stroke-linecap="round" stroke-linejoin="round"/><ellipse cx="4.9" cy="19.6" rx="3.6" ry="3" fill="none" stroke="#cfdfeb" stroke-width="2.1"/><ellipse cx="19.2" cy="16.8" rx="3.4" ry="2.8" fill="none" stroke="#cfdfeb" stroke-width="2.1"/></svg>
<svg class="i" style="left:70.3px;top:854.0px" width="23.0" height="18.0" viewBox="0 0 23 18"><path d="M7.5 1.6 H22 M7.5 9 H22 M7.5 16.4 H22" fill="none" stroke="#8b9eaf" stroke-width="2" stroke-linecap="round" stroke-linejoin="round"/><circle cx="1.6" cy="1.6" r="1.5" fill="#8b9eaf"/><circle cx="1.6" cy="9" r="1.5" fill="#8b9eaf"/><circle cx="1.6" cy="16.4" r="1.5" fill="#8b9eaf"/></svg>
<svg class="i" style="left:66.0px;top:906.8px" width="30.0" height="24.0" viewBox="0 0 30 24"><circle cx="6.6" cy="3.9" r="3.7" fill="#8b9eaf"/><circle cx="23.4" cy="3.9" r="3.7" fill="#8b9eaf"/><path d="M0 14.6 Q0 9.2 5.4 9.2 H8.2 Q10 9.2 11.2 10 Q8.6 12 8.6 15.4 H0.8 Q0 15.4 0 14.6 Z" fill="#8b9eaf"/><path d="M30 14.6 Q30 9.2 24.6 9.2 H21.8 Q20 9.2 18.8 10 Q21.4 12 21.4 15.4 H29.2 Q30 15.4 30 14.6 Z" fill="#8b9eaf"/><circle cx="15" cy="11" r="3.4" fill="none" stroke="#8b9eaf" stroke-width="1.9"/><path d="M6.9 23 Q6.9 17.4 12.4 17.4 H17.6 Q23.1 17.4 23.1 23 Z" fill="none" stroke="#8b9eaf" stroke-width="1.9" stroke-linecap="round" stroke-linejoin="round"/></svg>
<svg class="i" style="left:72.2px;top:961.8px" width="18.0" height="24.0" viewBox="0 0 18 24"><rect x="1" y="1" width="16" height="22" rx="2.6" fill="none" stroke="#8b9eaf" stroke-width="2"/><path d="M6.8 2 H11.2" fill="none" stroke="#8b9eaf" stroke-width="2.6" stroke-linecap="butt" stroke-linejoin="round"/><circle cx="9" cy="10" r="2.6" fill="#8b9eaf"/><path d="M4.4 18.2 Q4.4 14.2 9 14.2 Q13.6 14.2 13.6 18.2 Z" fill="#8b9eaf"/></svg>
<svg class="i" style="left:66.0px;top:1018.0px" width="30.0" height="24.0" viewBox="0 0 30 24"><rect x="13" y="1" width="16" height="22" rx="2.6" fill="none" stroke="#8b9eaf" stroke-width="2"/><circle cx="21" cy="14.6" r="4" fill="none" stroke="#8b9eaf" stroke-width="2"/><circle cx="21" cy="6.4" r="1.5" fill="#8b9eaf"/><path d="M10.4 1 H3.6 Q1 1 1 3.6 V20.4 Q1 23 3.6 23 H10.4" fill="none" stroke="#8b9eaf" stroke-width="2" stroke-linecap="butt" stroke-linejoin="round"/><path d="M10.4 10.6 H9 Q5 10.6 5 14.6 Q5 18.6 9 18.6 H10.4" fill="none" stroke="#8b9eaf" stroke-width="2" stroke-linecap="butt" stroke-linejoin="round"/><circle cx="9" cy="6.4" r="1.4" fill="#8b9eaf"/></svg>
<svg class="i" style="left:69.0px;top:1077.2px" width="24.0" height="18.0" viewBox="0 0 24 18"><rect x="0" y="0" width="24" height="8" rx="2.6" fill="#8b9eaf"/><rect x="0" y="10" width="24" height="8" rx="2.6" fill="#8b9eaf"/><rect x="15" y="2.2" width="7" height="3.6" rx="1" fill="#10293d"/><rect x="9" y="12.2" width="13" height="3.6" rx="1" fill="#10293d"/></svg>
<svg class="i" style="left:70.5px;top:1129.0px" width="23.0" height="24.0" viewBox="0 0 23 24"><rect x="1" y="1" width="17.6" height="22" rx="2.6" fill="none" stroke="#8b9eaf" stroke-width="2"/><circle cx="9.8" cy="9.3" r="2.7" fill="#8b9eaf"/><path d="M5 17.4 Q5 13.4 9.8 13.4 Q14.6 13.4 14.6 17.4 Z" fill="#8b9eaf"/><path d="M22 3.6 V7 M22 10.3 V13.7 M22 17 V20.4" fill="none" stroke="#8b9eaf" stroke-width="1.8" stroke-linecap="butt" stroke-linejoin="round"/></svg>
<svg class="i" style="left:69.4px;top:1185.0px" width="23.0" height="24.0" viewBox="0 0 23 24"><path d="M9.55 1.17 L13.45 1.17 L14.06 4.11 L17.05 5.83 L19.90 4.90 L21.85 8.27 L19.62 10.27 L19.62 13.73 L21.85 15.73 L19.90 19.10 L17.05 18.17 L14.06 19.89 L13.45 22.83 L9.55 22.83 L8.94 19.89 L5.95 18.17 L3.10 19.10 L1.15 15.73 L3.38 13.73 L3.38 10.27 L1.15 8.27 L3.10 4.90 L5.95 5.83 L8.94 4.11 Z" fill="none" stroke="#8b9eaf" stroke-width="2" stroke-linecap="round" stroke-linejoin="round"/><circle cx="11.5" cy="12" r="3.4" fill="none" stroke="#8b9eaf" stroke-width="2"/></svg>
<div class="b" style="left:464px;top:0px;width:2992px;height:96px;background:#10293d;"></div>
<svg class="i" style="left:503.7px;top:37.0px" width="21.0" height="18.0" viewBox="0 0 21 19"><path d="M1.5 1.9 H19.5 M1.5 9.5 H19.5 M1.5 17.1 H19.5" fill="none" stroke="#cbdcea" stroke-width="3" stroke-linecap="round" stroke-linejoin="round"/></svg>
<div class="t" style="left:534.5px;top:30.0px;height:32px;line-height:32px;font-size:24.96px;color:#cbdcea;letter-spacing:0.65px;">Performances</div>
<svg class="i" style="left:728.5px;top:40.5px" width="8.4" height="13.4" viewBox="0 0 9 15"><path d="M1.5 1.5 L7.5 7.5 L1.5 13.5" fill="none" stroke="#8b9eaf" stroke-width="2.2" stroke-linecap="round" stroke-linejoin="round"/></svg>
<div class="t" style="left:765.5px;top:30.0px;height:32px;line-height:32px;font-size:24.96px;color:#cbdcea;letter-spacing:-0.05px;">Sophia Rivera</div>
<svg class="i" style="left:2994.3px;top:34.0px" width="21.0" height="24.0" viewBox="0 0 21 24"><path d="M10.5 2.6 Q4.2 3 4.2 10 Q4.2 15.4 1.4 18.4 H19.6 Q16.8 15.4 16.8 10 Q16.8 3 10.5 2.6 Z" fill="none" stroke="#cbdcea" stroke-width="2" stroke-linecap="round" stroke-linejoin="round"/><path d="M10.5 0.9 V2.6" fill="none" stroke="#cbdcea" stroke-width="2.2" stroke-linecap="round" stroke-linejoin="round"/><path d="M7.3 20.6 H13.7 Q13.2 23.8 10.5 23.8 Q7.8 23.8 7.3 20.6 Z" fill="#cbdcea"/></svg>
<div class="t" style="left:3028.5px;top:30.0px;height:32px;line-height:32px;font-size:24.96px;color:#cbdcea;">0</div>
<div class="t" style="left:3119.0px;top:28.0px;height:36px;line-height:36px;font-size:29.12px;color:#cbdcea;">?</div>
<div class="t" style="left:3149.4px;top:30.0px;height:32px;line-height:32px;font-size:24.96px;color:#cbdcea;letter-spacing:1.17px;">Help</div>
<svg class="i" style="left:3217.1px;top:41.5px" width="21.0" height="12.0" viewBox="0 0 21 12"><path d="M1.6 1.6 L10.5 10.4 L19.4 1.6" fill="none" stroke="#cbdcea" stroke-width="3" stroke-linecap="round" stroke-linejoin="round"/></svg>
<svg class="i" style="left:3314.8px;top:34.2px" width="21.4" height="24.0" viewBox="0 0 21.4 24"><circle cx="10.7" cy="6" r="5" fill="none" stroke="#cbdcea" stroke-width="2"/><path d="M1 23 Q1 15 8 15 H13.4 Q20.4 15 20.4 23 Z" fill="none" stroke="#cbdcea" stroke-width="2" stroke-linecap="round" stroke-linejoin="round"/></svg>
<div class="t" style="left:3348.0px;top:30.0px;height:32px;line-height:32px;font-size:24.96px;color:#cbdcea;letter-spacing:1.15px;">Bert</div>
<div class="b" style="left:464px;top:96px;width:2992px;height:156px;background:#fff;"></div>
<svg class="i" style="left:509.5px;top:143.5px" width="32.0" height="29.0" viewBox="0 0 32 29"><path d="M29.4 14.5 H3.2 M13.4 3.4 L2.8 14.5 L13.4 25.6" fill="none" stroke="#231f20" stroke-width="5" stroke-linecap="round" stroke-linejoin="round"/></svg>
<div class="t" style="left:571.4px;top:132.0px;height:51px;line-height:51px;font-size:41.6px;color:#231f20;-webkit-text-stroke:1.66px;letter-spacing:0.20px;">Sophia Rivera</div>
<div class="t" style="left:494.7px;top:207.0px;height:36px;line-height:36px;font-size:29.12px;color:#5b5353;letter-spacing:0.73px;">Dashboard</div>
<div class="t" style="left:673.5px;top:207.0px;height:36px;line-height:36px;font-size:29.12px;color:#5b5353;letter-spacing:0.80px;">Contacts</div>
<div class="t" style="left:826.4px;top:207.0px;height:36px;line-height:36px;font-size:29.12px;color:#5b5353;letter-spacing:0.80px;">Tasks</div>
<div class="t" style="left:934.4px;top:207.0px;height:36px;line-height:36px;font-size:29.12px;color:#5b5353;letter-spacing:0.69px;">Info Sections</div>
<div class="t" style="left:1143.4px;top:207.0px;height:36px;line-height:36px;font-size:29.12px;color:#5b5353;letter-spacing:0.38px;">Travels</div>
<div class="t" style="left:1273.0px;top:207.0px;height:36px;line-height:36px;font-size:29.12px;color:#5b5353;letter-spacing:0.74px;">Accommodations</div>
<div class="t" style="left:1539.0px;top:207.0px;height:36px;line-height:36px;font-size:29.12px;color:#5b5353;letter-spacing:0.86px;">Accreditations</div>
<div class="t" style="left:1763.5px;top:207.0px;height:36px;line-height:36px;font-size:29.12px;color:#5b5353;letter-spacing:0.39px;">Guest Lists</div>
<div class="t" style="left:1943.7px;top:207.0px;height:36px;line-height:36px;font-size:29.12px;color:#5b5353;letter-spacing:0.88px;">Documents</div>
<div class="t" style="left:2130.4px;top:207.0px;height:36px;line-height:36px;font-size:29.12px;color:#231f20;letter-spacing:1.03px;-webkit-text-stroke:0.85px;">Advances</div>
<div class="b" style="left:464px;top:250px;width:2992px;height:2px;background:#e7e5e4;"></div>
<div class="b" style="left:2130px;top:246px;width:135px;height:4px;background:#7a706f;"></div>
<div class="b" style="left:464px;top:252px;width:2492px;height:126px;background:#fff;"></div>
<div class="b" style="left:464px;top:378px;width:2992px;height:2px;background:#e7e5e4;"></div>
<div class="t" style="left:516.9px;top:272.0px;height:32px;line-height:32px;font-size:24.96px;color:#5b5353;letter-spacing:0.73px;">Type</div>
<div class="t" style="left:521.2px;top:320.0px;height:32px;line-height:32px;font-size:24.96px;color:#231f20;letter-spacing:0.62px;">Large Band</div>
<svg class="i" style="left:668.1px;top:331.6px" width="21.0" height="12.0" viewBox="0 0 21 12"><path d="M1.6 1.6 L10.5 10.4 L19.4 1.6" fill="none" stroke="#231f20" stroke-width="3" stroke-linecap="round" stroke-linejoin="round"/></svg>
<div class="t" style="left:771.0px;top:272.0px;height:32px;line-height:32px;font-size:24.96px;color:#5b5353;letter-spacing:0.43px;">Project Leader</div>
<div class="t" style="left:777.2px;top:320.0px;height:32px;line-height:32px;font-size:24.96px;color:#231f20;letter-spacing:1.22px;">N/A</div>
<svg class="i" style="left:835.5px;top:331.6px" width="21.0" height="12.0" viewBox="0 0 21 12"><path d="M1.6 1.6 L10.5 10.4 L19.4 1.6" fill="none" stroke="#231f20" stroke-width="3" stroke-linecap="round" stroke-linejoin="round"/></svg>
<div class="t" style="left:990.9px;top:272.0px;height:32px;line-height:32px;font-size:24.96px;color:#5b5353;letter-spacing:0.41px;">Status</div>
<div class="t" style="left:997.0px;top:320.0px;height:32px;line-height:32px;font-size:24.96px;color:#231f20;letter-spacing:1.30px;">Confirmed</div>
<svg class="i" style="left:1134.7px;top:331.6px" width="21.0" height="12.0" viewBox="0 0 21 12"><path d="M1.6 1.6 L10.5 10.4 L19.4 1.6" fill="none" stroke="#231f20" stroke-width="3" stroke-linecap="round" stroke-linejoin="round"/></svg>
<div class="t" style="left:1217.5px;top:285.0px;height:32px;line-height:32px;font-size:24.96px;color:#5b5353;letter-spacing:0.40px;">Rating</div>
<svg class="i" style="left:1226.8px;top:318.2px" width="31.0" height="29.6" viewBox="0 0 31 29.6"><path d="M15.50 2.60 L19.61 10.54 L28.43 12.00 L22.16 18.36 L23.49 27.20 L15.50 23.20 L7.51 27.20 L8.84 18.36 L2.57 12.00 L11.39 10.54 Z" fill="#231f20" stroke="#231f20" stroke-width="3.4" stroke-linecap="round" stroke-linejoin="round"/></svg>
<svg class="i" style="left:1258.1px;top:318.2px" width="31.0" height="29.6" viewBox="0 0 31 29.6"><path d="M15.50 2.60 L19.61 10.54 L28.43 12.00 L22.16 18.36 L23.49 27.20 L15.50 23.20 L7.51 27.20 L8.84 18.36 L2.57 12.00 L11.39 10.54 Z" fill="#231f20" stroke="#231f20" stroke-width="3.4" stroke-linecap="round" stroke-linejoin="round"/></svg>
<svg class="i" style="left:1289.4px;top:318.2px" width="31.0" height="29.6" viewBox="0 0 31 29.6"><path d="M15.50 2.60 L19.61 10.54 L28.43 12.00 L22.16 18.36 L23.49 27.20 L15.50 23.20 L7.51 27.20 L8.84 18.36 L2.57 12.00 L11.39 10.54 Z" fill="#231f20" stroke="#231f20" stroke-width="3.4" stroke-linecap="round" stroke-linejoin="round"/></svg>
<svg class="i" style="left:1320.7px;top:318.2px" width="31.0" height="29.6" viewBox="0 0 31 29.6"><path d="M15.50 2.60 L19.61 10.54 L28.43 12.00 L22.16 18.36 L23.49 27.20 L15.50 23.20 L7.51 27.20 L8.84 18.36 L2.57 12.00 L11.39 10.54 Z" fill="#231f20" stroke="#231f20" stroke-width="3.4" stroke-linecap="round" stroke-linejoin="round"/></svg>
<svg class="i" style="left:1352.0px;top:318.2px" width="31.0" height="29.6" viewBox="0 0 31 29.6"><path d="M15.50 2.60 L19.50 10.70 L28.43 12.00 L21.97 18.30 L23.49 27.20 L15.50 23.00 L7.51 27.20 L9.03 18.30 L2.57 12.00 L11.50 10.70 Z" fill="none" stroke="#231f20" stroke-width="2.2" stroke-linecap="round" stroke-linejoin="round"/></svg>
<div class="b" style="left:2319px;top:284px;width:135px;height:60px;background:#fff;border:2px solid #e7e5e4;border-radius:13px;box-shadow:0 1px 2px rgba(0,0,0,.05);"></div>
<svg class="i" style="left:2347.8px;top:301.0px" width="24.0" height="24.0" viewBox="0 0 24 24"><g transform="rotate(45 12 12)"><path d="M8.4 0.3 Q8.4 -3.7 12 -3.7 Q15.6 -3.7 15.6 0.3 V1.2 H8.4 Z" fill="#231f20"/><path d="M8.4 3 H15.6 V19.6 L12.6 26.8 Q12 27.8 11.4 26.8 L8.4 19.6 Z" fill="#231f20"/><rect x="11.4" y="6.2" width="1.3" height="10" rx="0.6" fill="#fff"/></g></svg>
<div class="t" style="left:2382.7px;top:297.0px;height:32px;line-height:32px;font-size:24.96px;color:#231f20;letter-spacing:0.40px;">Edit</div>
<div class="b" style="left:2486px;top:284px;width:166px;height:60px;background:#fff;border:2px solid #e7e5e4;border-radius:13px;box-shadow:0 1px 2px rgba(0,0,0,.05);"></div>
<svg class="i" style="left:2515.0px;top:301.0px" width="24.0" height="24.0" viewBox="0 0 24 24"><path d="M3.7 8.2 A9.9 9.9 0 1 1 3.2 14.8" fill="none" stroke="#231f20" stroke-width="2.3" stroke-linecap="round" stroke-linejoin="round"/><path d="M1.3 1.6 V8.9 H8.6" fill="none" stroke="#231f20" stroke-width="2.3" stroke-linecap="round" stroke-linejoin="round"/><path d="M12.8 6.6 V12.3 L16.4 14.6" fill="none" stroke="#231f20" stroke-width="2.3" stroke-linecap="round" stroke-linejoin="round"/></svg>
<div class="t" style="left:2551.5px;top:297.0px;height:32px;line-height:32px;font-size:24.96px;color:#231f20;letter-spacing:0.90px;">Audits</div>
<div class="b" style="left:2684px;top:284px;width:208px;height:60px;background:#fff;border:2px solid #e7e5e4;border-radius:13px;box-shadow:0 1px 2px rgba(0,0,0,.05);"></div>
<svg class="i" style="left:2712.5px;top:301.0px" width="24.0" height="24.0" viewBox="0 0 24 24"><path d="M12 1.2 V15 M6.2 9.6 L12 15.4 L17.8 9.6" fill="none" stroke="#231f20" stroke-width="2.3" stroke-linecap="round" stroke-linejoin="round"/><path d="M6.6 15.3 H3.6 Q1.2 15.3 1.2 17.7 V20.4 Q1.2 22.8 3.6 22.8 H20.4 Q22.8 22.8 22.8 20.4 V17.7 Q22.8 15.3 20.4 15.3 H17.4" fill="none" stroke="#231f20" stroke-width="2.3" stroke-linecap="round" stroke-linejoin="round"/><circle cx="18.6" cy="19" r="1.25" fill="#231f20"/></svg>
<div class="t" style="left:2747.0px;top:297.0px;height:32px;line-height:32px;font-size:24.96px;color:#231f20;letter-spacing:1.18px;">Download</div>
<div class="b" style="left:464px;top:380px;width:2492px;height:124px;background:#fff;"></div>
<div class="b" style="left:464px;top:504px;width:2492px;height:2px;background:#e7e5e4;"></div>
<div class="b" style="left:1751px;top:412px;width:268px;height:60px;background:#fff;border:2px solid #e7e5e4;border-radius:13px;box-shadow:0 1px 2px rgba(0,0,0,.05);"></div>
<svg class="i" style="left:1779.5px;top:428.8px" width="24.0" height="24.0" viewBox="0 0 24 24"><path d="M3.7 8.2 A9.9 9.9 0 1 1 3.2 14.8" fill="none" stroke="#231f20" stroke-width="2.3" stroke-linecap="round" stroke-linejoin="round"/><path d="M1.3 1.6 V8.9 H8.6" fill="none" stroke="#231f20" stroke-width="2.3" stroke-linecap="round" stroke-linejoin="round"/><path d="M12.8 6.6 V12.3 L16.4 14.6" fill="none" stroke="#231f20" stroke-width="2.3" stroke-linecap="round" stroke-linejoin="round"/></svg>
<div class="t" style="left:1816.2px;top:425.0px;height:32px;line-height:32px;font-size:24.96px;color:#231f20;letter-spacing:0.90px;">Access History</div>
<div class="b" style="left:2052px;top:412px;width:245px;height:60px;background:#fff;border:2px solid #e7e5e4;border-radius:13px;box-shadow:0 1px 2px rgba(0,0,0,.05);"></div>
<svg class="i" style="left:2080.5px;top:428.8px" width="24.0" height="24.0" viewBox="0 0 24 24"><path d="M3.7 8.2 A9.9 9.9 0 1 1 3.2 14.8" fill="none" stroke="#231f20" stroke-width="2.3" stroke-linecap="round" stroke-linejoin="round"/><path d="M1.3 1.6 V8.9 H8.6" fill="none" stroke="#231f20" stroke-width="2.3" stroke-linecap="round" stroke-linejoin="round"/><path d="M12.8 6.6 V12.3 L16.4 14.6" fill="none" stroke="#231f20" stroke-width="2.3" stroke-linecap="round" stroke-linejoin="round"/></svg>
<div class="t" style="left:2115.0px;top:425.0px;height:32px;line-height:32px;font-size:24.96px;color:#231f20;letter-spacing:0.75px;">Email History</div>
<div class="b" style="left:2330px;top:412px;width:150px;height:60px;background:#fff;border:2px solid #e7e5e4;border-radius:13px;box-shadow:0 1px 2px rgba(0,0,0,.05);"></div>
<svg class="i" style="left:2359.2px;top:431.8px" width="24.0" height="18.0" viewBox="0 0 24 18"><rect x="1.15" y="1.15" width="21.7" height="15.7" rx="2.8" fill="none" stroke="#231f20" stroke-width="2.3"/><path d="M1.8 4.6 L10.4 11 Q12 12.2 13.6 11 L22.2 4.6" fill="none" stroke="#231f20" stroke-width="2.3" stroke-linecap="round" stroke-linejoin="round"/></svg>
<div class="t" style="left:2394.7px;top:425.0px;height:32px;line-height:32px;font-size:24.96px;color:#231f20;letter-spacing:0.65px;">Send</div>
<div class="b" style="left:2513px;top:412px;width:212px;height:60px;background:#fff;border:2px solid #e7e5e4;border-radius:13px;box-shadow:0 1px 2px rgba(0,0,0,.05);"></div>
<div class="b" style="left:2665px;top:414px;width:2px;height:55px;background:#e7e5e4;"></div>
<svg class="i" style="left:2541.6px;top:428.8px" width="24.0" height="24.0" viewBox="0 0 24 24"><path d="M9.5 4.6 H4 Q1.3 4.6 1.3 7.3 V20 Q1.3 22.7 4 22.7 H16.7 Q19.4 22.7 19.4 20 V14.5" fill="none" stroke="#231f20" stroke-width="2.5" stroke-linecap="round" stroke-linejoin="round"/><path d="M14.4 1.4 H22.6 V9.6 M22.2 1.8 L10.4 13.6" fill="none" stroke="#231f20" stroke-width="2.6" stroke-linecap="round" stroke-linejoin="round"/><path d="M15.5 1.4 H22.6 V8.5 Z" fill="#231f20"/></svg>
<div class="t" style="left:2576.9px;top:425.0px;height:32px;line-height:32px;font-size:24.96px;color:#231f20;letter-spacing:0.74px;">Open</div>
<svg class="i" style="left:2685.3px;top:436.8px" width="21.0" height="12.0" viewBox="0 0 21 12"><path d="M1.6 1.6 L10.5 10.4 L19.4 1.6" fill="none" stroke="#231f20" stroke-width="3" stroke-linecap="round" stroke-linejoin="round"/></svg>
<div class="b" style="left:2758px;top:412px;width:165px;height:60px;background:#fff;border:2px solid #e7e5e4;border-radius:13px;box-shadow:0 1px 2px rgba(0,0,0,.05);"></div>
<svg class="i" style="left:2788.8px;top:428.8px" width="20.0" height="24.0" viewBox="0 0 20 24"><path d="M1.2 4.6 H18.8 M6.4 4.4 L7.5 1.3 H12.5 L13.6 4.4" fill="none" stroke="#231f20" stroke-width="2.2" stroke-linecap="round" stroke-linejoin="round"/><path d="M2.9 5 L3.8 20.6 Q3.9 22.8 6.1 22.8 H13.9 Q16.1 22.8 16.2 20.6 L17.1 5" fill="none" stroke="#231f20" stroke-width="2.2" stroke-linecap="round" stroke-linejoin="round"/><path d="M6.7 8.6 V18.6 M10 8.6 V18.6 M13.3 8.6 V18.6" fill="none" stroke="#231f20" stroke-width="1.6" stroke-linecap="round" stroke-linejoin="round"/></svg>
<div class="t" style="left:2821.5px;top:425.0px;height:32px;line-height:32px;font-size:24.96px;color:#231f20;letter-spacing:0.80px;">Delete</div>
<div class="b" style="left:2956px;top:252px;width:500px;height:1524px;background:#fff;"></div>
<div class="b" style="left:2956px;top:252px;width:2px;height:1524px;background:#e7e5e4;"></div>
<div class="b" style="left:2956px;top:378px;width:500px;height:2px;background:#e7e5e4;"></div>
<div class="t" style="left:2987.9px;top:292.0px;height:46px;line-height:46px;font-size:37.44px;color:#231f20;-webkit-text-stroke:1.50px;letter-spacing:2.15px;">Itinerary</div>
<div class="b" style="left:3287px;top:285px;width:136px;height:60px;background:#fff;border:2px solid #e7e5e4;border-radius:13px;box-shadow:0 1px 2px rgba(0,0,0,.05);"></div>
<svg class="i" style="left:3317.0px;top:304.4px" width="19.6" height="19.6" viewBox="0 0 17.5 17.5"><path d="M8.75 1.2 V16.3 M1.2 8.75 H16.3" fill="none" stroke="#231f20" stroke-width="2.4" stroke-linecap="round" stroke-linejoin="round"/></svg>
<div class="t" style="left:3350.9px;top:298.0px;height:32px;line-height:32px;font-size:24.96px;color:#231f20;letter-spacing:1.45px;">Add</div>
<div class="t" style="left:3062.4px;top:398.0px;height:32px;line-height:32px;font-size:24.96px;color:#5b5353;letter-spacing:0.21px;">Wednesday</div>
<div class="t" style="left:3060.2px;top:435.0px;height:41px;line-height:41px;font-size:33.28px;color:#231f20;-webkit-text-stroke:1.33px;letter-spacing:1.14px;">11th of March</div>
<div class="b" style="left:3440px;top:380px;width:16px;height:940px;background:#dcd9d9;border-radius:8px;"></div>
<div class="t" style="left:3070.0px;top:513.0px;height:32px;line-height:32px;font-size:24.96px;color:#5b5353;letter-spacing:0.96px;">06:00 - 07:00</div>
<div class="t" style="left:3069.0px;top:549.0px;height:32px;line-height:32px;font-size:24.96px;color:#1f1b1c;letter-spacing:0.74px;">Main Tour - Flight #2244</div>
<div class="t" style="left:3069.0px;top:585.0px;height:32px;line-height:32px;font-size:24.96px;color:#5b5353;-webkit-text-stroke:1.00px;letter-spacing:0.62px;">From:</div>
<div class="t" style="left:3143.7px;top:585.0px;height:32px;line-height:32px;font-size:24.96px;color:#5b5353;letter-spacing:0.74px;">Large Airport</div>
<div class="t" style="left:3070.5px;top:621.0px;height:32px;line-height:32px;font-size:24.96px;color:#5b5353;-webkit-text-stroke:1.00px;letter-spacing:1.37px;">To:</div>
<div class="t" style="left:3112.7px;top:621.0px;height:32px;line-height:32px;font-size:24.96px;color:#5b5353;letter-spacing:0.87px;">Local Airport</div>
<svg class="i" style="left:3014.0px;top:569.5px" width="32.0" height="28.0" viewBox="0 0 32 28"><path d="M30.8 14 Q30.8 10.9 26.4 10.9 H21 L14.6 1.2 H10.8 L14.2 10.9 H8.4 L5.6 7.2 H1.8 L3.8 14 L1.8 20.8 H5.6 L8.4 17.1 H14.2 L10.8 26.8 H14.6 L21 17.1 H26.4 Q30.8 17.1 30.8 14 Z" fill="none" stroke="#5b5353" stroke-width="2.1" stroke-linecap="round" stroke-linejoin="round"/></svg>
<div class="t" style="left:3069.1px;top:689.0px;height:32px;line-height:32px;font-size:24.96px;color:#5b5353;letter-spacing:0.47px;">10:00 - 14:00</div>
<div class="t" style="left:3069.0px;top:725.0px;height:32px;line-height:32px;font-size:24.96px;color:#1f1b1c;letter-spacing:0.70px;">Delivery</div>
<div class="t" style="left:3070.3px;top:761.0px;height:32px;line-height:32px;font-size:24.96px;color:#5b5353;font-style:italic;letter-spacing:0.15px;">Sophia Rivera - Echt</div>
<div class="t" style="left:3070.3px;top:797.0px;height:32px;line-height:32px;font-size:24.96px;color:#5b5353;font-style:italic;letter-spacing:0.38px;">Feesten! 2026 Main Venue</div>
<div class="t" style="left:3069.0px;top:833.0px;height:32px;line-height:32px;font-size:24.96px;color:#5b5353;letter-spacing:0.55px;">Deliver something</div>
<svg class="i" style="left:3016.8px;top:767.0px" width="27.0" height="21.0" viewBox="0 0 27 21"><path d="M9 2.5 H27 M9 10.5 H27 M9 18.5 H27" fill="none" stroke="#5b5353" stroke-width="2.4" stroke-linecap="butt" stroke-linejoin="round"/><rect x="0.3" y="0.4" width="4.4" height="4.2" rx="0.9" fill="#5b5353"/><rect x="0.3" y="8.4" width="4.4" height="4.2" rx="0.9" fill="#5b5353"/><rect x="0.3" y="16.4" width="4.4" height="4.2" rx="0.9" fill="#5b5353"/></svg>
<div class="t" style="left:3069.1px;top:901.0px;height:32px;line-height:32px;font-size:24.96px;color:#5b5353;letter-spacing:0.29px;">12:00 - 12:45</div>
<div class="t" style="left:3071.0px;top:937.0px;height:32px;line-height:32px;font-size:24.96px;color:#1f1b1c;letter-spacing:0.66px;">Airport Transport</div>
<div class="t" style="left:3069.0px;top:973.0px;height:32px;line-height:32px;font-size:24.96px;color:#5b5353;-webkit-text-stroke:1.00px;letter-spacing:0.62px;">From:</div>
<div class="t" style="left:3145.7px;top:973.0px;height:32px;line-height:32px;font-size:24.96px;color:#5b5353;letter-spacing:0.77px;">Airport</div>
<div class="t" style="left:3070.5px;top:1009.0px;height:32px;line-height:32px;font-size:24.96px;color:#5b5353;-webkit-text-stroke:1.00px;letter-spacing:1.37px;">To:</div>
<div class="t" style="left:3114.6px;top:1009.0px;height:32px;line-height:32px;font-size:24.96px;color:#5b5353;letter-spacing:0.47px;">Venue Down town</div>
<svg class="i" style="left:3016.0px;top:959.5px" width="28.0" height="24.0" viewBox="0 0 28 24"><path d="M3.4 10.2 L5.6 3.6 Q6.4 1.2 8.8 1.2 H19.2 Q21.6 1.2 22.4 3.6 L24.6 10.2" fill="none" stroke="#5b5353" stroke-width="2.2" stroke-linecap="round" stroke-linejoin="round"/><path d="M1.2 22.8 V12.8 Q1.2 10.2 3.8 10.2 H24.2 Q26.8 10.2 26.8 12.8 V22.8 M1.2 19 H26.8" fill="none" stroke="#5b5353" stroke-width="2.2" stroke-linecap="round" stroke-linejoin="round"/><circle cx="6.4" cy="14.6" r="1.6" fill="#5b5353"/><circle cx="21.6" cy="14.6" r="1.6" fill="#5b5353"/></svg>
<div class="t" style="left:3069.1px;top:1077.0px;height:32px;line-height:32px;font-size:24.96px;color:#5b5353;letter-spacing:0.38px;">15:00 - 18:00</div>
<div class="t" style="left:3069.0px;top:1113.0px;height:32px;line-height:32px;font-size:24.96px;color:#1f1b1c;letter-spacing:1.02px;">Pickup</div>
<div class="t" style="left:3070.3px;top:1149.0px;height:32px;line-height:32px;font-size:24.96px;color:#5b5353;font-style:italic;letter-spacing:0.15px;">Sophia Rivera - Echt</div>
<div class="t" style="left:3070.3px;top:1185.0px;height:32px;line-height:32px;font-size:24.96px;color:#5b5353;font-style:italic;letter-spacing:0.38px;">Feesten! 2026 Main Venue</div>
<div class="t" style="left:3069.0px;top:1221.0px;height:32px;line-height:32px;font-size:24.96px;color:#5b5353;letter-spacing:0.61px;">Pick up something</div>
<svg class="i" style="left:3016.8px;top:1155.0px" width="27.0" height="21.0" viewBox="0 0 27 21"><path d="M9 2.5 H27 M9 10.5 H27 M9 18.5 H27" fill="none" stroke="#5b5353" stroke-width="2.4" stroke-linecap="butt" stroke-linejoin="round"/><rect x="0.3" y="0.4" width="4.4" height="4.2" rx="0.9" fill="#5b5353"/><rect x="0.3" y="8.4" width="4.4" height="4.2" rx="0.9" fill="#5b5353"/><rect x="0.3" y="16.4" width="4.4" height="4.2" rx="0.9" fill="#5b5353"/></svg>
<div class="t" style="left:3069.1px;top:1301.0px;height:32px;line-height:32px;font-size:24.96px;color:#5b5353;letter-spacing:0.34px;">15:00</div>
<div class="t" style="left:3069.8px;top:1337.0px;height:32px;line-height:32px;font-size:24.96px;color:#1f1b1c;letter-spacing:0.40px;">Check In</div>
<svg class="i" style="left:3012.5px;top:1322.9px" width="35.0" height="25.0" viewBox="0 0 35 25"><path d="M1.2 1.2 V23.8 M1.2 18.6 H33.8 V23.8" fill="none" stroke="#5b5353" stroke-width="2.2" stroke-linecap="round" stroke-linejoin="round"/><path d="M14.6 18.4 V7 H28 Q33.8 7 33.8 12.6 V18.6" fill="none" stroke="#5b5353" stroke-width="2.2" stroke-linecap="round" stroke-linejoin="round"/><circle cx="8" cy="11.4" r="3.2" fill="none" stroke="#5b5353" stroke-width="2.2"/></svg>
<div class="t" style="left:3069.1px;top:1417.0px;height:32px;line-height:32px;font-size:24.96px;color:#5b5353;letter-spacing:-0.11px;">18:00 - 18:15</div>
<div class="t" style="left:3070.5px;top:1453.0px;height:32px;line-height:32px;font-size:24.96px;color:#1f1b1c;letter-spacing:0.34px;">To the Buss Station</div>
<div class="t" style="left:3069.0px;top:1489.0px;height:32px;line-height:32px;font-size:24.96px;color:#5b5353;-webkit-text-stroke:1.00px;letter-spacing:0.62px;">From:</div>
<div class="t" style="left:3143.7px;top:1489.0px;height:32px;line-height:32px;font-size:24.96px;color:#5b5353;letter-spacing:0.45px;">Echt Feesten! 2026</div>
<div class="t" style="left:3069.0px;top:1525.0px;height:32px;line-height:32px;font-size:24.96px;color:#5b5353;letter-spacing:0.48px;">Main Venue</div>
<div class="t" style="left:3070.5px;top:1561.0px;height:32px;line-height:32px;font-size:24.96px;color:#5b5353;-webkit-text-stroke:1.00px;letter-spacing:1.37px;">To:</div>
<div class="t" style="left:3112.7px;top:1561.0px;height:32px;line-height:32px;font-size:24.96px;color:#5b5353;letter-spacing:0.49px;">Bus Station</div>
<svg class="i" style="left:3016.0px;top:1494.0px" width="28.0" height="24.0" viewBox="0 0 28 24"><path d="M3.4 10.2 L5.6 3.6 Q6.4 1.2 8.8 1.2 H19.2 Q21.6 1.2 22.4 3.6 L24.6 10.2" fill="none" stroke="#5b5353" stroke-width="2.2" stroke-linecap="round" stroke-linejoin="round"/><path d="M1.2 22.8 V12.8 Q1.2 10.2 3.8 10.2 H24.2 Q26.8 10.2 26.8 12.8 V22.8 M1.2 19 H26.8" fill="none" stroke="#5b5353" stroke-width="2.2" stroke-linecap="round" stroke-linejoin="round"/><circle cx="6.4" cy="14.6" r="1.6" fill="#5b5353"/><circle cx="21.6" cy="14.6" r="1.6" fill="#5b5353"/></svg>
<div class="t" style="left:3069.1px;top:1629.0px;height:32px;line-height:32px;font-size:24.96px;color:#5b5353;letter-spacing:0.80px;">18:00 - 23:00</div>
<div class="t" style="left:3070.6px;top:1665.0px;height:32px;line-height:32px;font-size:24.96px;color:#1f1b1c;letter-spacing:1.09px;">Job</div>
<div class="t" style="left:3070.3px;top:1701.0px;height:32px;line-height:32px;font-size:24.96px;color:#5b5353;font-style:italic;letter-spacing:0.15px;">Sophia Rivera - Echt</div>
<div class="t" style="left:3070.3px;top:1737.0px;height:32px;line-height:32px;font-size:24.96px;color:#5b5353;font-style:italic;letter-spacing:0.38px;">Feesten! 2026 Main Venue</div>
<svg class="i" style="left:3016.8px;top:1706.5px" width="27.0" height="21.0" viewBox="0 0 27 21"><path d="M9 2.5 H27 M9 10.5 H27 M9 18.5 H27" fill="none" stroke="#5b5353" stroke-width="2.4" stroke-linecap="butt" stroke-linejoin="round"/><rect x="0.3" y="0.4" width="4.4" height="4.2" rx="0.9" fill="#5b5353"/><rect x="0.3" y="8.4" width="4.4" height="4.2" rx="0.9" fill="#5b5353"/><rect x="0.3" y="16.4" width="4.4" height="4.2" rx="0.9" fill="#5b5353"/></svg>
<div class="b" style="left:464px;top:1662px;width:2488px;height:114px;background:#fff;border-top:2px solid #e7e5e4;"></div>
<div class="b" style="left:464px;top:1603px;width:240px;height:59px;background:#fff;border:2px solid #e7e5e4;border-bottom:none;border-left:none;border-radius:4px 12px 0 0;"></div>
<svg class="i" style="left:490.6px;top:1621.3px" width="17.8" height="21.3" viewBox="0 0 19 22"><path d="M1.6 1.6 H17.4" fill="none" stroke="#231f20" stroke-width="3.1" stroke-linecap="round" stroke-linejoin="round"/><path d="M9.5 7 V19.6 M3.2 13.6 L9.5 19.9 L15.8 13.6" fill="none" stroke="#231f20" stroke-width="3.1" stroke-linecap="round" stroke-linejoin="round"/></svg>
<div class="t" style="left:524.3px;top:1615.0px;height:32px;line-height:32px;font-size:24.96px;color:#231f20;letter-spacing:1.04px;">Progress 4/8</div>
<div class="b" style="left:763px;top:1664px;width:4px;height:112px;background:#e7e5e4;"></div>
<div class="b" style="left:1009px;top:1664px;width:4px;height:112px;background:#e7e5e4;"></div>
<div class="b" style="left:1254px;top:1664px;width:4px;height:112px;background:#e7e5e4;"></div>
<div class="b" style="left:1500px;top:1664px;width:4px;height:112px;background:#e7e5e4;"></div>
<div class="b" style="left:1781px;top:1664px;width:4px;height:112px;background:#e7e5e4;"></div>
<div class="b" style="left:2027px;top:1664px;width:4px;height:112px;background:#e7e5e4;"></div>
<div class="b" style="left:2273px;top:1664px;width:4px;height:112px;background:#e7e5e4;"></div>
<div class="t" style="left:587.2px;top:1689.0px;height:32px;line-height:32px;font-size:24.96px;color:#231f20;letter-spacing:0.49px;">Offer In</div>
<div class="b" style="left:616.5px;top:1725.0px;width:27px;height:27px;background:#fff;border:3px solid #cdc7c7;border-radius:5px;"></div>
<div class="t" style="left:801.9px;top:1689.0px;height:32px;line-height:32px;font-size:24.96px;color:#231f20;letter-spacing:0.70px;">Offer Agreed</div>
<div class="b" style="left:862.5px;top:1725.0px;width:27px;height:27px;background:#27a844;border-radius:5px;"></div>
<svg class="i" style="left:862.5px;top:1725.0px" width="27.0" height="27.0" viewBox="0 0 27 27"><path d="M7.4 14 L11.6 18.2 L19.8 9.4" fill="none" stroke="#fff" stroke-width="3" stroke-linecap="round" stroke-linejoin="round"/></svg>
<div class="t" style="left:1061.0px;top:1689.0px;height:32px;line-height:32px;font-size:24.96px;color:#231f20;letter-spacing:0.91px;">Confirmed</div>
<div class="b" style="left:1108.5px;top:1725.0px;width:27px;height:27px;background:#fff;border:3px solid #cdc7c7;border-radius:5px;"></div>
<div class="t" style="left:1303.2px;top:1689.0px;height:32px;line-height:32px;font-size:24.96px;color:#231f20;letter-spacing:0.60px;">Announced</div>
<div class="b" style="left:1354.5px;top:1725.0px;width:27px;height:27px;background:#fff;border:3px solid #cdc7c7;border-radius:5px;"></div>
<div class="t" style="left:1514.1px;top:1689.0px;height:32px;line-height:32px;font-size:24.96px;color:#231f20;letter-spacing:0.54px;">Schedule Confirmed</div>
<div class="b" style="left:1618.0px;top:1725.0px;width:27px;height:27px;background:#27a844;border-radius:5px;"></div>
<svg class="i" style="left:1618.0px;top:1725.0px" width="27.0" height="27.0" viewBox="0 0 27 27"><path d="M7.4 14 L11.6 18.2 L19.8 9.4" fill="none" stroke="#fff" stroke-width="3" stroke-linecap="round" stroke-linejoin="round"/></svg>
<div class="t" style="left:1816.8px;top:1689.0px;height:32px;line-height:32px;font-size:24.96px;color:#231f20;letter-spacing:0.46px;">Itinerary Sent</div>
<div class="b" style="left:1881.5px;top:1725.0px;width:27px;height:27px;background:#27a844;border-radius:5px;"></div>
<svg class="i" style="left:1881.5px;top:1725.0px" width="27.0" height="27.0" viewBox="0 0 27 27"><path d="M7.4 14 L11.6 18.2 L19.8 9.4" fill="none" stroke="#fff" stroke-width="3" stroke-linecap="round" stroke-linejoin="round"/></svg>
<div class="t" style="left:2062.2px;top:1689.0px;height:32px;line-height:32px;font-size:24.96px;color:#231f20;letter-spacing:0.25px;">Advance Sent</div>
<div class="b" style="left:2127.7px;top:1725.0px;width:27px;height:27px;background:#fff;border:3px solid #cdc7c7;border-radius:5px;"></div>
<div class="t" style="left:2287.7px;top:1689.0px;height:32px;line-height:32px;font-size:24.96px;color:#231f20;letter-spacing:0.39px;">Advance Received</div>
<div class="b" style="left:2380.3px;top:1725.0px;width:27px;height:27px;background:#27a844;border-radius:5px;"></div>
<svg class="i" style="left:2380.3px;top:1725.0px" width="27.0" height="27.0" viewBox="0 0 27 27"><path d="M7.4 14 L11.6 18.2 L19.8 9.4" fill="none" stroke="#fff" stroke-width="3" stroke-linecap="round" stroke-linejoin="round"/></svg>
<div class="b" style="left:464px;top:1660px;width:240px;height:4px;background:#e6e3e3;"></div>
</div></body></html>
